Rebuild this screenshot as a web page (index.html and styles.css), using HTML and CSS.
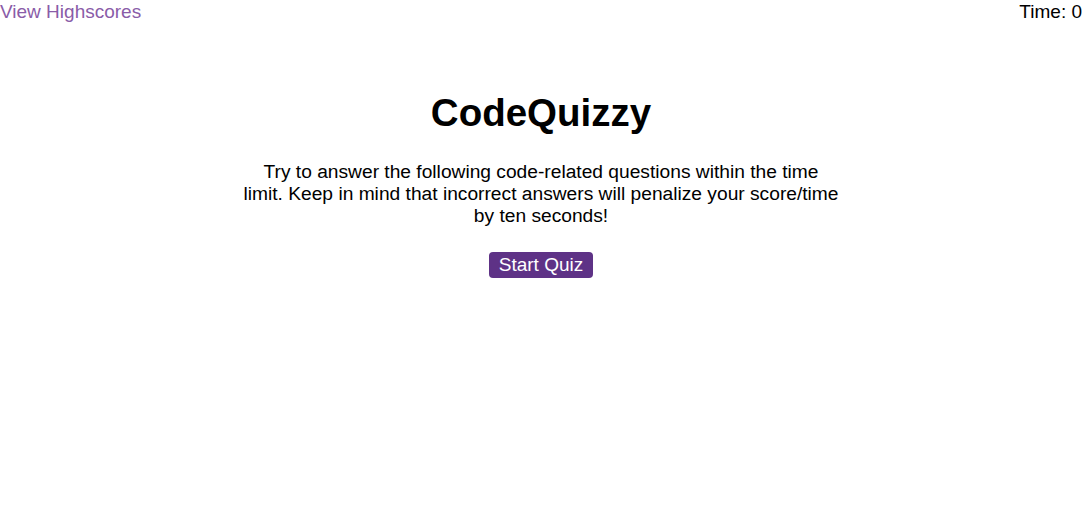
FILE: index.html
```html
<!DOCTYPE html>
<html>
<head>
<meta charset="utf-8">
<link rel="stylesheet" href="styles.css">
</head>
<body>
<header class="topbar">
  <a class="highscores" href="#">View Highscores</a>
  <span class="timer">Time: 0</span>
</header>
<main class="intro">
  <h1 class="title">CodeQuizzy</h1>
  <p class="desc">Try to answer the following code-related questions within the time limit. Keep in mind that incorrect answers will penalize your score/time by ten seconds!</p>
  <button class="start">Start Quiz</button>
</main>
</body>
</html>
```
FILE: styles.css
```css
html, body {
  margin: 0;
  background: #fff;
}
body {
  font-family: "Liberation Sans", Arial, sans-serif;
  color: #000;
  padding-right: 7px;
}
.topbar {
  display: flex;
  justify-content: space-between;
  font-size: 19px;
  line-height: 24px;
}
.highscores {
  color: #8a5ca8;
  text-decoration: none;
}
.intro {
  display: flex;
  flex-direction: column;
  align-items: center;
  text-align: center;
  margin-top: 67px;
}
.title {
  font-size: 38.5px;
  font-weight: bold;
  margin: 0;
  line-height: 44px;
}
.desc {
  width: 598px;
  font-size: 19.2px;
  line-height: 22px;
  margin: 26px 0 0;
}
.start {
  margin-top: 25px;
  font-family: "Liberation Sans", Arial, sans-serif;
  font-size: 19px;
  line-height: 22px;
  color: #fff;
  background: #5e3286;
  border: none;
  border-radius: 4px;
  padding: 2px 10px;
}
```
